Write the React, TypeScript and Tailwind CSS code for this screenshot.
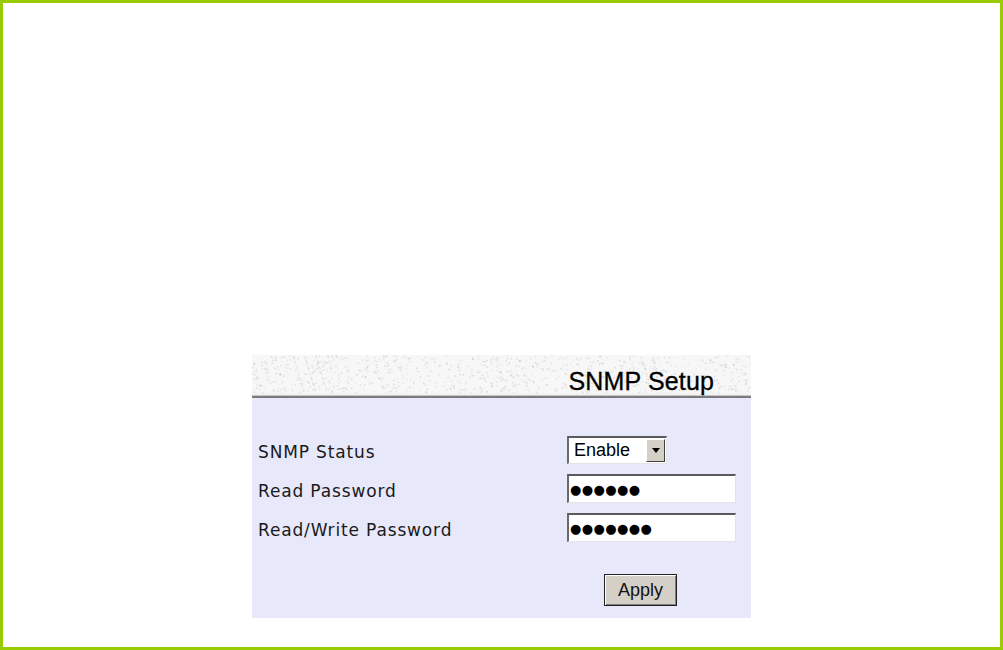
import React from "react";

// light speckled texture used behind the page title
const Speckle = () => {
  const dots: { x: number; y: number; o: number }[] = [];
  let seed = 7;
  const rnd = () => {
    seed = (seed * 9301 + 49297) % 233280;
    return seed / 233280;
  };
  for (let i = 0; i < 900; i++) {
    dots.push({ x: rnd() * 499, y: rnd() * 38, o: 0.08 + rnd() * 0.18 });
  }
  return (
    <svg className="absolute inset-0" width="499" height="38" viewBox="0 0 499 38">
      {dots.map((d, i) => (
        <rect key={i} x={d.x} y={d.y} width="1.5" height="1.5" fill="#808080" opacity={d.o} />
      ))}
    </svg>
  );
};

const Field = ({ value }: { value: string }) => (
  <div className="flex h-[29px] w-[169px] items-center border-t-2 border-l-2 border-r border-b border-t-[#5a5a5a] border-l-[#6a6a6a] border-r-[#e4e4e4] border-b-[#e4e4e4] bg-white pl-[1px]">
    <span className="text-[13px] leading-none tracking-[0.4px] text-black" style={{ fontFamily: "'DejaVu Sans', sans-serif" }}>
      {value}
    </span>
  </div>
);

export default function App() {
  return (
    <div className="h-[650px] w-[1003px] border-[3px] border-[#99cc00] bg-white">
      <div className="pl-[249px] pt-[352px]">
        <div className="w-[499px]">
          {/* header */}
          <div className="relative h-[38px] bg-[#f7f7f7]">
            <Speckle />
            <div
              className="relative flex h-full items-end justify-end pr-[37px] text-[25px] leading-none tracking-[0.15px] text-black"
              style={{ fontFamily: "'Liberation Sans', Arial, sans-serif", WebkitTextStroke: "0.3px #000" }}
            >
              <span className="translate-y-[1px]">SNMP Setup</span>
            </div>
          </div>
          <div className="h-[2px] bg-[#f2f2f2]" />
          <div className="h-px bg-[#c8c8c8]" />
          <div className="h-[2px] bg-[#7a7a7a]" />

          {/* body */}
          <div className="h-[220px] bg-[#e8e8fb] pt-[32px]" style={{ fontFamily: "'DejaVu Sans', Verdana, sans-serif" }}>
            <div className="grid grid-cols-[315px_1fr] grid-rows-[39px_39px_39px]">
              <div className="flex items-center pl-[6px] pt-[6px] text-[17px] tracking-[0.85px] text-[#1a1a1a]">SNMP Status</div>
              <div className="flex items-center">
                <div className="flex h-[28px] w-[100px] items-center border-t-2 border-l-2 border-r border-b border-t-[#5a5a5a] border-l-[#6a6a6a] border-r-[#e4e4e4] border-b-[#e4e4e4] bg-white">
                  <span
                    className="flex-1 pl-[5px] text-[18px] leading-none text-black"
                    style={{ fontFamily: "'Liberation Sans', Arial, sans-serif" }}
                  >
                    Enable
                  </span>
                  <div className="mr-px flex h-[23px] w-[19px] items-center justify-center border border-t-white border-l-white border-r-[#404040] border-b-[#404040] bg-[#d4d0c8]">
                    <svg width="8" height="5" viewBox="0 0 8 5">
                      <path d="M0 0H8L4 5Z" fill="#000" />
                    </svg>
                  </div>
                </div>
              </div>

              <div className="flex items-center pl-[6px] pt-[6px] text-[17px] tracking-[0.85px] text-[#1a1a1a]">Read Password</div>
              <div className="flex items-center">
                <Field value="●●●●●●" />
              </div>

              <div className="flex items-center pl-[6px] pt-[6px] text-[17px] tracking-[0.85px] text-[#1a1a1a]">Read/Write Password</div>
              <div className="flex items-center">
                <Field value="●●●●●●●" />
              </div>
            </div>

            <div className="pl-[352px] pt-[27px]">
              <button
                className="flex h-[32px] w-[73px] items-center justify-center border border-[#202020] bg-[#d4d0c8] text-[18px] text-[#111] shadow-[inset_1px_1px_0_#ffffff,inset_-1px_-1px_0_#808080]"
                style={{ fontFamily: "'Liberation Sans', Arial, sans-serif" }}
              >
                Apply
              </button>
            </div>
          </div>
        </div>
      </div>
    </div>
  );
}
